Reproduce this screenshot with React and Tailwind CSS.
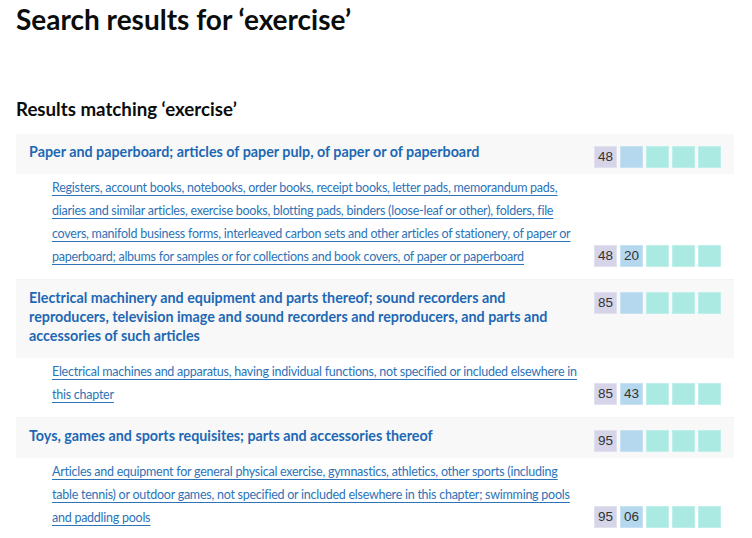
import React from "react";

const sections = [
  {
    chapter: "48",
    title: "Paper and paperboard; articles of paper pulp, of paper or of paperboard",
    heading: "20",
    desc: [
      "Registers, account books, notebooks, order books, receipt books, letter pads, memorandum pads,",
      "diaries and similar articles, exercise books, blotting pads, binders (loose-leaf or other), folders, file",
      "covers, manifold business forms, interleaved carbon sets and other articles of stationery, of paper or",
      "paperboard; albums for samples or for collections and book covers, of paper or paperboard",
    ],
  },
  {
    chapter: "85",
    title:
      "Electrical machinery and equipment and parts thereof; sound recorders and reproducers, television image and sound recorders and reproducers, and parts and accessories of such articles",
    heading: "43",
    desc: [
      "Electrical machines and apparatus, having individual functions, not specified or included elsewhere in",
      "this chapter",
    ],
  },
  {
    chapter: "95",
    title: "Toys, games and sports requisites; parts and accessories thereof",
    heading: "06",
    desc: [
      "Articles and equipment for general physical exercise, gymnastics, athletics, other sports (including",
      "table tennis) or outdoor games, not specified or included elsewhere in this chapter; swimming pools",
      "and paddling pools",
    ],
  },
];

const Codes = ({ chapter, heading }) => (
  <div className="flex gap-[3px] font-['Liberation_Sans',sans-serif] text-[13.5px] text-[#333]">
    <span className="w-[23px] h-[22px] flex items-center justify-center bg-[#d5d4e8] border border-[#e2e1ef]">
      {chapter}
    </span>
    <span className="w-[23px] h-[22px] flex items-center justify-center bg-[#b5d8ee] border border-[#c7e2f3]">
      {heading}
    </span>
    <span className="w-[23px] h-[22px] bg-[#abe9e3] border border-[#bfefea]" />
    <span className="w-[23px] h-[22px] bg-[#abe9e3] border border-[#bfefea]" />
    <span className="w-[23px] h-[22px] bg-[#abe9e3] border border-[#bfefea]" />
  </div>
);

export default function App() {
  return (
    <div className="bg-white min-h-screen px-[16px] pr-[18px] font-['Lato',sans-serif] text-[#0b0c0c]">
      <h1 className="pt-[2px] text-[28px] leading-[34px] font-bold">
        Search results for ‘exercise’
      </h1>
      <h2 className="mt-[61px] text-[18.7px] leading-[24px] font-bold">
        Results matching ‘exercise’
      </h2>
      <div className="mt-[13px]">
        {sections.map((s) => (
          <div key={s.chapter}>
            <div className="flex bg-[#f8f8f8]">
              <div className="flex-1 min-w-0 pl-[13px] pr-[30px] pt-[8px] pb-[13px] text-[14.3px] leading-[19px] font-bold text-[#1d68b4]">
                {s.title}
              </div>
              <div className="w-[140px] shrink-0 pt-[12px] pr-[13px] flex justify-end">
                <Codes chapter={s.chapter} />
              </div>
            </div>
            <div className="flex border-b border-[#f3f3f3]">
              <div className="flex-1 min-w-0 pl-[36px] pr-[4px] pt-[2px] pb-[11px] text-[12.5px] tracking-[-0.25px] leading-[23px] text-[#2d73b8] underline underline-offset-[3px] whitespace-nowrap">
                <a href="#">
                  {s.desc.map((line, i) => (
                    <React.Fragment key={i}>
                      {line}
                      {i < s.desc.length - 1 && <br />}
                    </React.Fragment>
                  ))}
                </a>
              </div>
              <div className="w-[140px] shrink-0 flex items-end justify-end pb-[12px] pr-[13px]">
                <Codes chapter={s.chapter} heading={s.heading} />
              </div>
            </div>
          </div>
        ))}
      </div>
    </div>
  );
}
